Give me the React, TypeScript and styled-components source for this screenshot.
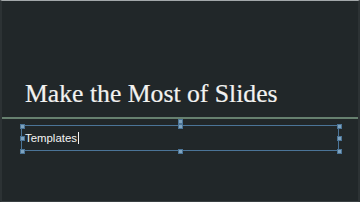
import React from "react";
import styled, { createGlobalStyle } from "styled-components";

const Global = createGlobalStyle`
  html, body { margin: 0; padding: 0; background: #212729; }
  #root { width: 360px; height: 202px; }
`;

const Slide = styled.div`
  position: relative;
  box-sizing: border-box;
  width: 360px;
  height: 202px;
  background: #212729;
  border-top: 1px solid #a3a8aa;
  border-left: 2px solid #2c3234;
  border-right: 2px solid #2c3234;
  border-bottom: 1px solid #3a4042;
  display: flex;
  flex-direction: column;
  overflow: hidden;
`;

const Title = styled.h1`
  margin: 78px 0 0 0;
  padding-left: 23px;
  font-family: "Liberation Serif", "Times New Roman", serif;
  font-weight: 400;
  font-size: 25.7px;
  line-height: 30px;
  color: #f2f2f0;
  white-space: nowrap;
  -webkit-text-stroke: 0.2px #f2f2f0;
`;

const Divider = styled.div`
  margin-top: 8px;
  height: 2px;
  background: #66806f;
`;

const BoxWrap = styled.div`
  position: relative;
  margin: 6px 0 0 19px;
  width: 318px;
`;

const TextBox = styled.div`
  box-sizing: border-box;
  width: 318px;
  height: 26px;
  border: 1px solid #4b7497;
  display: flex;
  align-items: center;
  padding-left: 3px;
  font-family: "Liberation Sans", Arial, sans-serif;
  font-size: 11.4px;
  line-height: 13px;
  color: #f4f4f4;
`;

const Caret = styled.span`
  display: inline-block;
  width: 1px;
  height: 12px;
  background: #f4f4f4;
  margin-left: 1px;
  vertical-align: middle;
`;

const Handle = styled.span<{ $x: number; $y: number }>`
  position: absolute;
  left: ${(p) => p.$x}px;
  top: ${(p) => p.$y}px;
  width: 3px;
  height: 3px;
  margin: -2px 0 0 -2px;
  background: #7ea3bf;
  border: 0.5px solid #4b7497;
`;

const handles: Array<[number, number]> = [
  [0.5, 0.5],
  [159, 0.5],
  [317.5, 0.5],
  [0.5, 13],
  [317.5, 13],
  [0.5, 25.5],
  [159, 25.5],
  [317.5, 25.5],
  [159, -4],
];

export default function App() {
  return (
    <>
      <Global />
      <Slide>
        <Title>Make the Most of Slides</Title>
        <Divider />
        <BoxWrap>
          <TextBox>
            Templates
            <Caret />
          </TextBox>
          {handles.map(([x, y], i) => (
            <Handle key={i} $x={x} $y={y} />
          ))}
        </BoxWrap>
      </Slide>
    </>
  );
}
